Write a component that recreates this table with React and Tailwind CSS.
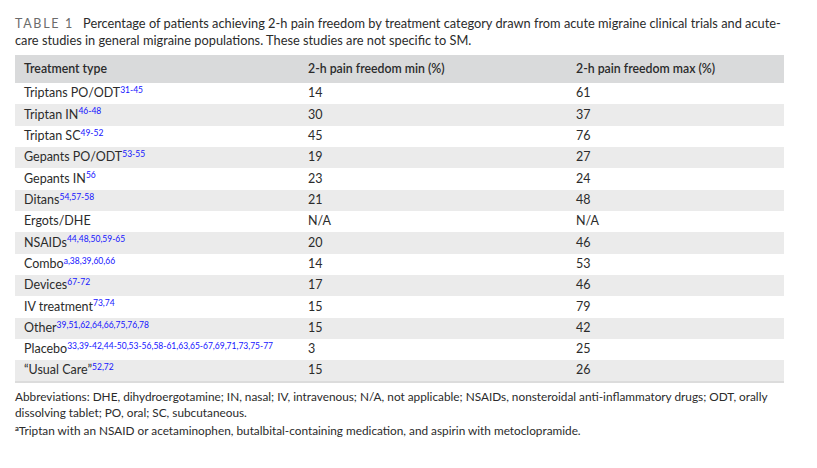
const rows = [
  ['Triptans PO/ODT', '31-45', '14', '61'],
  ['Triptan IN', '46-48', '30', '37'],
  ['Triptan SC', '49-52', '45', '76'],
  ['Gepants PO/ODT', '53-55', '19', '27'],
  ['Gepants IN', '56', '23', '24'],
  ['Ditans', '54,57-58', '21', '48'],
  ['Ergots/DHE', '', 'N/A', 'N/A'],
  ['NSAIDs', '44,48,50,59-65', '20', '46'],
  ['Combo', 'a,38,39,60,66', '14', '53'],
  ['Devices', '67-72', '17', '46'],
  ['IV treatment', '73,74', '15', '79'],
  ['Other', '39,51,62,64,66,75,76,78', '15', '42'],
  ['Placebo', '33,39-42,44-50,53-56,58-61,63,65-67,69,71,73,75-77', '3', '25'],
  ['\u201cUsual Care\u201d', '52,72', '15', '26'],
];

export default function App() {
  return (
    <div className="w-[817px] h-[468px] bg-white pl-[15px] pt-[15px] text-[#2b2b2b] font-['Lato',sans-serif]">
      <p className="w-[770px] text-[12.8px] leading-[17px]">
        <span className="inline-block leading-[17px] text-[12.5px] tracking-[1.7px] text-[#6b6b6b] mr-[9px]">TABLE 1</span>
        Percentage of patients achieving 2-h pain freedom by treatment category drawn from acute migraine clinical trials and acute-&#8203;care studies in general migraine populations. These studies are not specific to SM.
      </p>

      <table className="mt-[6px] w-[769px] table-fixed border-collapse text-[12.5px] border-b-2 border-[#dcdcdc]">
        <colgroup>
          <col className="w-[284px]" />
          <col className="w-[268px]" />
          <col className="w-[217px]" />
        </colgroup>
        <thead>
          <tr className="h-[28px] bg-[#d9dadb] text-left text-[12.3px]">
            <th className="pl-[9px] font-semibold">Treatment type</th>
            <th className="pl-[9px] font-semibold">2-h pain freedom min (%)</th>
            <th className="pl-[9px] font-semibold">2-h pain freedom max (%)</th>
          </tr>
        </thead>
        <tbody>
          {rows.map(([name, refs, min, max], i) => (
            <tr key={name} className={i % 2 === 1 ? 'h-[21.35px] bg-[#ebebeb]' : 'h-[21.35px] bg-white'}>
              <td className="pl-[9px] whitespace-nowrap">
                {name}
                {refs && <sup className="text-[8.5px] text-[#1414ff]">{refs}</sup>}
              </td>
              <td className="pl-[9px]">{min}</td>
              <td className="pl-[9px]">{max}</td>
            </tr>
          ))}
        </tbody>
      </table>

      <div className="mt-[6px] w-[770px] text-[11.8px] leading-[16px]">
        <p>
          Abbreviations: DHE, dihydroergotamine; IN, nasal; IV, intravenous; N/A, not applicable; NSAIDs, nonsteroidal anti-inflammatory drugs; ODT, orally dissolving tablet; PO, oral; SC, subcutaneous.
        </p>
        <p className="mt-[2px]">
          <sup className="text-[7.5px] font-bold">a</sup>Triptan with an NSAID or acetaminophen, butalbital-containing medication, and aspirin with metoclopramide.
        </p>
      </div>
    </div>
  );
}
